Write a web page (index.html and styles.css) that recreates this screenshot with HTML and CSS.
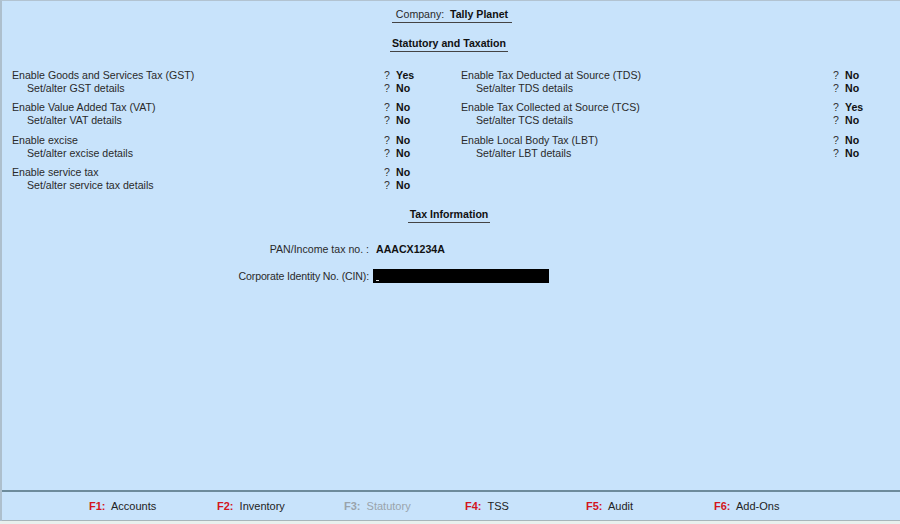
FILE: index.html
```html
<!DOCTYPE html>
<html>
<head>
<meta charset="utf-8">
<title>Statutory and Taxation</title>
<link rel="stylesheet" href="styles.css">
</head>
<body>
<div class="screen">
  <main class="main">
    <div class="title-wrap">
      <span class="company">Company:&nbsp; <b>Tally Planet</b></span>
    </div>
    <div class="heading-wrap heading-first">
      <span class="heading">Statutory and Taxation</span>
    </div>

    <div class="columns">
      <div class="col">
        <div class="group">
          <div class="row"><span class="label">Enable Goods and Services Tax (GST)</span><span class="q">?</span><span class="val">Yes</span></div>
          <div class="row sub"><span class="label">Set/alter GST details</span><span class="q">?</span><span class="val">No</span></div>
        </div>
        <div class="group">
          <div class="row"><span class="label">Enable Value Added Tax (VAT)</span><span class="q">?</span><span class="val">No</span></div>
          <div class="row sub"><span class="label">Set/alter VAT details</span><span class="q">?</span><span class="val">No</span></div>
        </div>
        <div class="group">
          <div class="row"><span class="label">Enable excise</span><span class="q">?</span><span class="val">No</span></div>
          <div class="row sub"><span class="label">Set/alter excise details</span><span class="q">?</span><span class="val">No</span></div>
        </div>
        <div class="group">
          <div class="row"><span class="label">Enable service tax</span><span class="q">?</span><span class="val">No</span></div>
          <div class="row sub"><span class="label">Set/alter service tax details</span><span class="q">?</span><span class="val">No</span></div>
        </div>
      </div>
      <div class="col">
        <div class="group">
          <div class="row"><span class="label">Enable Tax Deducted at Source (TDS)</span><span class="q">?</span><span class="val">No</span></div>
          <div class="row sub"><span class="label">Set/alter TDS details</span><span class="q">?</span><span class="val">No</span></div>
        </div>
        <div class="group">
          <div class="row"><span class="label">Enable Tax Collected at Source (TCS)</span><span class="q">?</span><span class="val">Yes</span></div>
          <div class="row sub"><span class="label">Set/alter TCS details</span><span class="q">?</span><span class="val">No</span></div>
        </div>
        <div class="group">
          <div class="row"><span class="label">Enable Local Body Tax (LBT)</span><span class="q">?</span><span class="val">No</span></div>
          <div class="row sub"><span class="label">Set/alter LBT details</span><span class="q">?</span><span class="val">No</span></div>
        </div>
      </div>
    </div>

    <div class="heading-wrap heading-tax">
      <span class="heading">Tax Information</span>
    </div>

    <div class="taxinfo">
      <span class="ti-label">PAN/Income tax no. :</span>
      <span class="ti-val">AAACX1234A</span>
      <span class="ti-label cin">Corporate Identity No. (CIN):</span>
      <span class="ti-input"><span class="cursor"></span></span>
    </div>
  </main>

  <footer class="footer">
    <div class="keys">
      <span class="key"><b class="fk">F1:</b>&nbsp; Accounts</span>
      <span class="key"><b class="fk">F2:</b>&nbsp; Inventory</span>
      <span class="key disabled"><b class="fk">F3:</b>&nbsp; Statutory</span>
      <span class="key"><b class="fk">F4:</b>&nbsp; TSS</span>
      <span class="key"><b class="fk">F5:</b>&nbsp; Audit</span>
      <span class="key"><b class="fk">F6:</b>&nbsp; Add-Ons</span>
    </div>
  </footer>
  <div class="bottom-strip"></div>
</div>
</body>
</html>
```

FILE: styles.css
```css
* { box-sizing: border-box; }

html, body {
  margin: 0;
  padding: 0;
  width: 900px;
  height: 524px;
  overflow: hidden;
}

body {
  font-family: "Liberation Sans", Arial, sans-serif;
  font-size: 11px;
  color: #2a2a2a;
  background: #c8e3fb;
}

.screen {
  width: 900px;
  height: 524px;
  display: flex;
  flex-direction: column;
  border-top: 1px solid #b2c3d1;
  border-left: 2px solid #adbfcd;
}

.main {
  flex: 1;
  display: flex;
  flex-direction: column;
  font-size: 10.6px;
}

.title-wrap, .heading-wrap {
  display: flex;
  justify-content: center;
  line-height: 13px;
}

.title-wrap {
  margin-top: 7px;
  padding-left: 2px;
}

.company {
  padding: 0 4px 1px 4px;
  border-bottom: 1px solid #444;
}

.company b { color: #111; }

.heading {
  font-weight: bold;
  color: #111;
  padding: 0 2px 1px 2px;
  border-bottom: 1px solid #444;
}

.heading-first { margin-top: 14px; padding-right: 4px; }

.columns {
  display: grid;
  grid-template-columns: 449px 449px;
  margin-top: 17px;
  padding-left: 10px;
}

.group { margin-bottom: 6.4px; }

.row {
  display: grid;
  grid-template-columns: 372px 12px auto;
  line-height: 13px;
}

.row.sub .label { padding-left: 15px; }

.q { color: #333; }

.val {
  font-weight: bold;
  color: #111;
}

.heading-tax { margin-top: 9px; padding-right: 4px; }

.taxinfo {
  display: grid;
  grid-template-columns: 367px auto;
  column-gap: 4px;
  row-gap: 13px;
  margin-top: 19px;
  line-height: 14px;
  align-items: center;
}

.ti-label {
  text-align: right;
  color: #2a2a2a;
}

.ti-label.cin { letter-spacing: -0.15px; }

.ti-val {
  font-weight: bold;
  color: #111;
  padding-left: 3px;
}

.ti-input {
  width: 176px;
  height: 14px;
  background: #000;
  position: relative;
}

.cursor {
  position: absolute;
  left: 3px;
  bottom: 2px;
  width: 3px;
  height: 1px;
  background: #ddd;
}

.footer {
  height: 31px;
  border-top: 2px solid #6d8b9b;
  border-bottom: 1px solid #a8b5ba;
  display: flex;
  align-items: center;
}

.keys {
  display: grid;
  grid-template-columns: 128px 127px 121px 121px 128px auto;
  padding-left: 87px;
  width: 100%;
  color: #222;
}

.key .fk {
  color: #d3151c;
}

.key.disabled, .key.disabled .fk {
  color: #9aa3ab;
  font-weight: normal;
}

.key.disabled .fk { font-weight: bold; }

.bottom-strip {
  height: 3px;
  background: #e8f0ee;
  margin-left: -2px;
}
```
